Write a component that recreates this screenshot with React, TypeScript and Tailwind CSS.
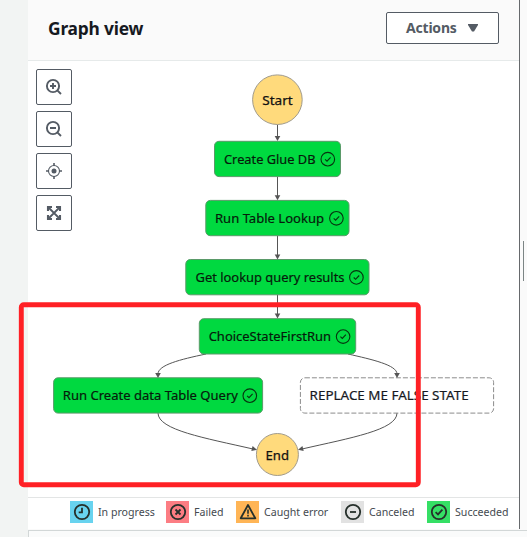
import React from 'react';

type NodeProps = {
  x: number;
  y: number;
  w: number;
  label: string;
  textX: number;
  textW: number;
  iconX?: number;
};

const CHECK = 'M-2.7 0.1 L-0.8 1.9 L2.8 -1.9';

function StateNode({ x, y, w, label, textX, textW, iconX }: NodeProps) {
  const done = iconX !== undefined;
  return (
    <g>
      <rect
        x={x}
        y={y}
        width={w}
        height={35.3}
        rx={4.5}
        fill={done ? '#00d940' : '#ffffff'}
        stroke={done ? '#5a9a69' : '#8c8c8c'}
        strokeWidth={1}
        strokeDasharray={done ? undefined : '5 2'}
      />
      <text
        x={textX}
        y={y + 22.6}
        textLength={textW}
        lengthAdjust="spacingAndGlyphs"
        fontSize={13}
        fill={done ? '#061a0b' : '#16191f'}
        stroke={done ? '#061a0b' : '#16191f'}
        strokeWidth={0.2}
      >
        {label}
      </text>
      {done && (
        <g transform={`translate(${iconX} ${y + 17.9})`} fill="none" stroke="#06330f" strokeWidth={1.1}>
          <circle r={6.8} />
          <path d={CHECK} />
        </g>
      )}
    </g>
  );
}

const EDGES = [
  'M277.5 124.5 V137',
  'M277.5 176.5 V196',
  'M277.5 235.5 V255',
  'M277.5 294.5 V314',
  'M206 354 C180 359.5 158 365 158 374',
  'M348 354 C372 359.5 397 365 397 374',
  'M158 413 C158 430 205 438 253 449',
  'M397 413 C397 430 350 438 302 449',
];

const ARROWS = [
  'M277.5 141 l-2.8 -5 h5.6 z',
  'M277.5 200.3 l-2.8 -5 h5.6 z',
  'M277.5 259.5 l-2.8 -5 h5.6 z',
  'M277.5 318.5 l-2.8 -5 h5.6 z',
  'M158 378 l-2.8 -5 h5.6 z',
  'M397 378 l-2.8 -5 h5.6 z',
  'M257 449.8 l-4.4 -3.9 l-1.3 5.2 z',
  'M298 449.8 l4.4 -3.9 l1.3 5.2 z',
];

function Graph() {
  return (
    <svg
      className="absolute left-0 top-0 font-['Noto_Sans','Open_Sans',sans-serif]"
      width="527"
      height="537"
      viewBox="0 0 527 537"
    >
      <g fill="none" stroke="#555555" strokeWidth={1}>
        {EDGES.map((d) => (
          <path key={d} d={d} />
        ))}
      </g>
      <g fill="#ffda7c" stroke="#a19b8c" strokeWidth={1}>
        <circle cx={277.4} cy={99.7} r={24.8} />
        <circle cx={277.4} cy={454.5} r={21} />
      </g>
      <g fontSize={13} fill="#111111" stroke="#111111" strokeWidth={0.25}>
        <text x={262.2} y={105} textLength={30.5} lengthAdjust="spacingAndGlyphs">Start</text>
        <text x={265.5} y={460} textLength={23.5} lengthAdjust="spacingAndGlyphs">End</text>
      </g>
      <StateNode x={214.5} y={141.3} w={126} label="Create Glue DB" textX={224} textW={91.5} iconX={327.8} />
      <StateNode x={205.8} y={200.4} w={143.2} label="Run Table Lookup" textX={215} textW={109} iconX={336.4} />
      <StateNode x={185.8} y={259.5} w={183.2} label="Get lookup query results" textX={195.5} textW={149} iconX={356.4} />
      <StateNode x={199.3} y={318.7} w={156.4} label="ChoiceStateFirstRun" textX={208.7} textW={122.3} iconX={343.1} />
      <StateNode x={53.6} y={377.8} w={209} label="Run Create data Table Query" textX={62.8} textW={175.2} iconX={249.8} />
      <StateNode x={300.4} y={377.8} w={193.2} label="REPLACE ME FALSE STATE" textX={309.6} textW={159} />
      <g fill="#555555">
        {ARROWS.map((d) => (
          <path key={d} d={d} />
        ))}
      </g>
      <rect x={21.3} y={304.8} width={397} height={179.9} rx={2.5} fill="none" stroke="#ff2025" strokeWidth={4.9} />
    </svg>
  );
}

function ToolButton({ children }: { children: React.ReactNode }) {
  return (
    <button className="flex size-9 items-center justify-center rounded-[2px] border border-[#545b64] bg-white">
      <svg width="18" height="18" viewBox="0 0 18 18" fill="none" stroke="#545b64" strokeWidth={1.9}>
        {children}
      </svg>
    </button>
  );
}

function Legend({ box, width, label, children }: { box: string; width: string; label: string; children: React.ReactNode }) {
  return (
    <div className={`flex h-[22px] shrink-0 items-center ${width}`}>
      <span className={`flex h-[22px] w-[23px] shrink-0 items-center justify-center ${box}`}>
        <svg width="18" height="18" viewBox="0 0 18 18" fill="none" stroke="#26302b" strokeWidth={1.8}>
          {children}
        </svg>
      </span>
      <span className="ml-[5px] origin-left scale-x-[0.965] whitespace-nowrap pb-0.5 text-[11px] leading-none text-[#444a50]">
        {label}
      </span>
    </div>
  );
}

export default function App() {
  return (
    <div className="relative flex h-[537px] w-[527px] overflow-hidden bg-[#fafafa] font-['Noto_Sans','Open_Sans',sans-serif]">
      <div className="w-7 shrink-0 bg-[#f2f4f3]" />
      <div className="flex min-w-0 flex-1 flex-col">
        <div className="flex h-[529px]">
          <main className="flex w-[492px] flex-col border-r border-[#66696c] bg-white">
            <header className="flex h-[61px] shrink-0 items-center justify-between border-b border-[#e6eaea] bg-[#fafafa] pb-[5px] pl-5 pr-5">
              <h1 className="origin-left scale-x-[0.965] whitespace-nowrap text-[18px] font-bold leading-6 tracking-[-0.2px] text-[#16191f]">
                Graph view
              </h1>
              <button className="flex h-8 w-[113px] items-center rounded-[2px] border border-[#545b64] bg-white pl-[19px] text-left text-[14px] font-bold text-[#545b64]">
                <span className="w-[62px] whitespace-nowrap tracking-[-0.2px]">Actions</span>
                <svg width="10" height="8" viewBox="0 0 10 8" fill="#545b64">
                  <path d="M0 0 H10 V1 L6 7.5 H4 L0 1 Z" />
                </svg>
              </button>
            </header>
            <section className="flex flex-1 flex-col gap-1.5 pl-2 pt-2">
              <ToolButton>
                <circle cx="8" cy="8" r="6.1" />
                <path d="M12.3 12.3 L16 16 M5 8 H11 M8 5 V11" />
              </ToolButton>
              <ToolButton>
                <circle cx="8" cy="8" r="6.1" />
                <path d="M12.3 12.3 L16 16 M5 8 H11" />
              </ToolButton>
              <ToolButton>
                <circle cx="9" cy="9" r="5.5" strokeWidth={1.1} />
                <circle cx="9" cy="9" r="2.5" fill="#545b64" stroke="none" />
                <path d="M9 1 V4 M9 14 V17 M1 9 H4 M14 9 H17" strokeWidth={1.6} />
              </ToolButton>
              <ToolButton>
                <path d="M3 7 V3 H7 M11 3 H15 V7 M15 11 V15 H11 M7 15 H3 V11" strokeWidth={2.1} />
                <path d="M3 3 L15 15 M15 3 L3 15" strokeWidth={1.8} />
              </ToolButton>
            </section>
            <footer className="flex h-8 shrink-0 items-center border-t border-[#e3e5e5] pl-[42px] pb-[3px]">
              <Legend box="bg-[#68d3ef]" width="w-24" label="In progress">
                <circle cx="9" cy="9" r="7.2" />
                <path d="M9 4.8 V9.3 H5.7" />
              </Legend>
              <Legend box="bg-[#fc7d83]" width="w-[70px]" label="Failed">
                <circle cx="9" cy="9" r="7.2" />
                <path d="M6.5 6.5 L11.5 11.5 M11.5 6.5 L6.5 11.5" />
              </Legend>
              <Legend box="bg-[#ffb556]" width="w-[105px]" label="Caught error">
                <path d="M9 2 L16.3 15.3 H1.7 Z" strokeLinejoin="round" />
                <path d="M9 6.5 V10.7 M9 11.8 V13.4" strokeWidth={1.6} />
              </Legend>
              <Legend box="bg-[#e2e2e2]" width="w-[86px]" label="Canceled">
                <circle cx="9" cy="9" r="7.2" />
                <path d="M6 9 H12" />
              </Legend>
              <Legend box="bg-[#35df65]" width="w-[90px]" label="Succeeded">
                <circle cx="9" cy="9" r="7.2" />
                <path d="M5.6 9.2 L8 11.4 L12.4 6.6" />
              </Legend>
            </footer>
          </main>
          <aside className="flex-1 pl-[3px] pt-[241px]">
            <div className="h-10 w-px bg-[#7c8585]" />
          </aside>
        </div>
        <div className="mt-px flex-1 border-l border-t border-[#d2d7d7] bg-[#fafbfb]" />
      </div>
      <Graph />
    </div>
  );
}
